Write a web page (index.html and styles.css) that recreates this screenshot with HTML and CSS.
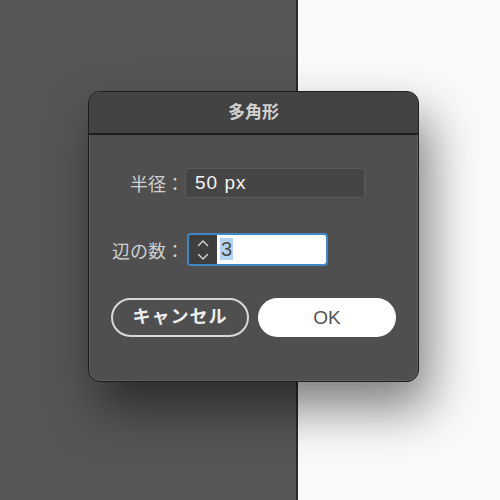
FILE: index.html
```html
<!DOCTYPE html>
<html>

	<head>
		<meta charset="UTF-8">
		<title>多角形</title>
		<link rel="stylesheet" href="styles.css">
	</head>

	<body>
		<div class="desk">
			<div class="panel"></div>
			<div class="canvas"></div>
		</div>
		<div class="dialog">
			<div class="title">多角形</div>
			<div class="body">
				<div class="form">
					<label class="label">半径：</label>
					<div class="field">50 px</div>
					<label class="label">辺の数：</label>
					<div class="spin">
						<div class="stepper">
							<svg width="14" height="24" viewBox="0 0 14 24">
								<path d="M2.5 7.5 L7 3 L11.5 7.5" fill="none" stroke="#d8d8d8" stroke-width="1.4" stroke-linecap="round" stroke-linejoin="round"/>
								<path d="M2.5 16.5 L7 21 L11.5 16.5" fill="none" stroke="#d8d8d8" stroke-width="1.4" stroke-linecap="round" stroke-linejoin="round"/>
							</svg>
						</div>
						<div class="input"><span class="sel">3</span></div>
					</div>
				</div>
				<div class="buttons">
					<a href="javascript:;" class="btn cancel">キャンセル</a>
					<a href="javascript:;" class="btn ok">OK</a>
				</div>
			</div>
		</div>
	</body>

</html>
```

FILE: styles.css
```css
* {
	box-sizing: border-box;
}

body {
	margin: 0;
	font-family: "Liberation Sans", "Noto Sans CJK JP", sans-serif;
}

a {
	text-decoration: none;
}

.desk {
	display: flex;
	height: 500px;
}

.panel {
	width: 298px;
	background-color: #565656;
	border-right: 2px solid #2a2a2a;
}

.canvas {
	flex: 1;
	background-color: #fafafa;
}

/* 对话框 */
.dialog {
	position: absolute;
	top: 91px;
	left: 88px;
	width: 331px;
	height: 291px;
	background-color: #4f4f4f;
	border: 1px solid #1f1f1f;
	border-radius: 12px;
	overflow: hidden;
	box-shadow: inset 0 0 0 1px #5e5e5e, 10px 26px 50px rgba(0, 0, 0, 0.5);
}

.title {
	height: 43px;
	line-height: 41px;
	text-align: center;
	font-size: 17px;
	font-weight: bold;
	color: #d2d2d2;
	background-color: #434343;
	border-bottom: 2px solid #1e1e1e;
}

.body {
	padding: 33px 21px 0 22px;
}

.form {
	display: grid;
	grid-template-columns: 73px auto;
	column-gap: 1px;
	row-gap: 35px;
	align-items: center;
	justify-items: start;
}

.label {
	justify-self: end;
	font-size: 18px;
	color: #cfcfcf;
}

.field {
	width: 180px;
	height: 30px;
	padding-left: 9px;
	line-height: 28px;
	font-size: 19px;
	letter-spacing: 1px;
	color: #f4f4f4;
	background-color: #454545;
	border: 1px solid #5a5a5a;
	border-radius: 3px;
}

.spin {
	display: flex;
	width: 141px;
	height: 33px;
	margin-left: 2px;
	border: 2px solid #4187c6;
	border-radius: 4px;
	overflow: hidden;
}

.stepper {
	display: flex;
	align-items: center;
	justify-content: center;
	width: 28px;
	background-color: #3e3e3e;
}

.input {
	flex: 1;
	padding-left: 3px;
	background-color: #fff;
	font-size: 20px;
	line-height: 29px;
	color: #4a4a4a;
}

.sel {
	padding: 0 1px;
	background-color: #b3d3f2;
}

.buttons {
	display: flex;
	gap: 9px;
	margin-top: 32px;
}

.btn {
	display: block;
	width: 138px;
	height: 39px;
	border-radius: 20px;
	text-align: center;
}

.cancel {
	line-height: 35px;
	font-size: 18px;
	letter-spacing: 1px;
	color: #eeeeee;
	font-weight: bold;
	border: 2px solid #d8d8d8;
}

.ok {
	line-height: 39px;
	font-size: 19px;
	color: #555;
	background-color: #fff;
}
```
